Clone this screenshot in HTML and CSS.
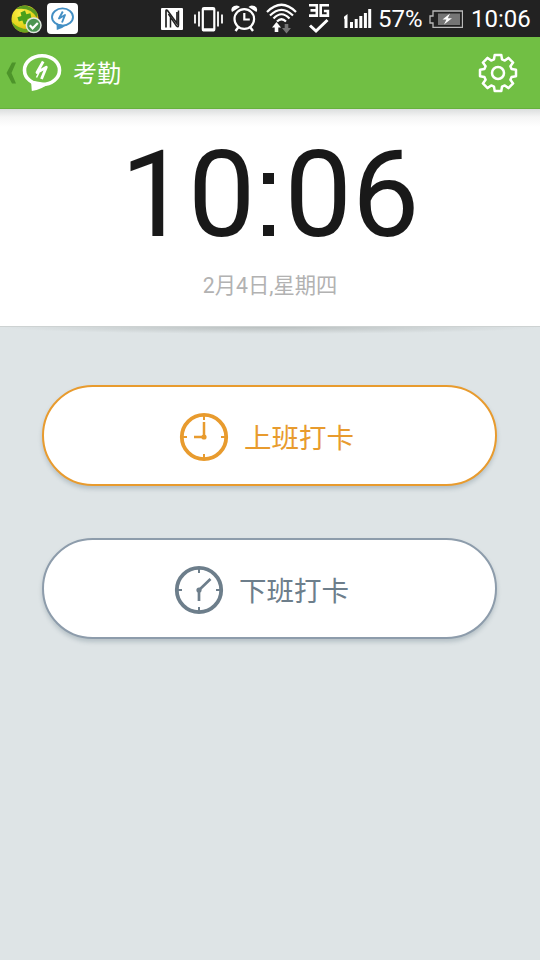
FILE: index.html
```html
<!DOCTYPE html>
<html lang="zh-CN">
<head>
<meta charset="utf-8">
<title>考勤</title>
<link rel="stylesheet" href="styles.css">
</head>
<body>
<div class="status-bar">
  <svg class="app-guard" width="32" height="31" viewBox="11 3 32 31">
    <defs>
      <radialGradient id="ball" cx="0.35" cy="0.3" r="0.75">
        <stop offset="0" stop-color="#fff04a"/><stop offset="0.6" stop-color="#e2d51c"/><stop offset="1" stop-color="#e99b12"/>
      </radialGradient>
      <clipPath id="ballClip"><circle cx="25" cy="19" r="13.5"/></clipPath>
    </defs>
    <circle cx="25" cy="19" r="13.5" fill="url(#ball)"/>
    <g clip-path="url(#ballClip)">
      <path d="M17 7Q28 2 38 13L37 18Q31 7 17 9Z" fill="#5c9a20"/>
      <path d="M12 22Q19 30 31 29L29 34H14Z" fill="#68a81e"/>
      <path d="M20.500 12.500l4.500-2 1.400 3.800 4-1 1 4.600-4 1.200 1 4-4.500 1.500-1.500-4-3.600 1-1.400-4.400 4-1.300z" fill="#4ba01b"/>
    </g>
    <circle cx="33.700" cy="25.300" r="7.300" fill="#4b9451" stroke="#dfe9df" stroke-width="1.500"/>
    <path d="M29.800 25.300l2.800 3 5.200-5.300" fill="none" stroke="#fff" stroke-width="2.200"/>
  </svg>
  <svg class="app-chat" width="31" height="31" viewBox="47 3 31 31">
    <rect x="47" y="3" width="31" height="31" rx="4" fill="#fff"/>
    <ellipse cx="62.500" cy="17" rx="10.500" ry="8.600" fill="none" stroke="#438fc4" stroke-width="1.900"/>
    <path d="M56.500 23.500l.3 6.500q5-1 9-4.500z" fill="#438fc4"/>
    <path d="M62.800 11.500L59 18.500L65 15L62 22.500" fill="none" stroke="#438fc4" stroke-width="1.900" stroke-linejoin="round"/>
  </svg>
  <svg class="nfc" width="22" height="22" viewBox="161 7 22 22">
    <rect x="161" y="7" width="22" height="22" rx="1" fill="#fff"/>
    <path d="M166 26.500V10q0-1.500 1.500-.5l9.500 13V11" fill="none" stroke="#222" stroke-width="1.700"/>
    <path d="M170.500 15v11.500M178.500 9.500V24q0 3-2 1L168.500 13" fill="none" stroke="#222" stroke-width="1.500"/>
  </svg>
  <svg class="vibrate" width="29" height="26" viewBox="194 5 29 26">
    <path d="M195 13.500v9M199 10.500v15M218 10.500v15M222 13.500v9" stroke="#fff" stroke-width="1.800"/>
    <rect x="202.800" y="7" width="11.500" height="22.500" rx="1.500" fill="none" stroke="#fff" stroke-width="2.200"/>
    <path d="M202 8h13M202 28.500h13" stroke="#fff" stroke-width="2.400"/>
  </svg>
  <svg class="alarm" width="27" height="27" viewBox="231 5 27 27">
    <g fill="none" stroke="#fff">
      <circle cx="244.300" cy="19" r="9.800" stroke-width="2.200"/>
      <path d="M244.300 13v6.500h5.500" stroke-width="2.200"/>
      <path d="M238.500 27l-3 4M250 27l3 4" stroke-width="2.400"/>
    </g>
    <path d="M232 12q-2-4 2-6 4-1.500 6 1zM256.500 12q2-4-2-6-4-1.500-6 1z" fill="#fff"/>
  </svg>
  <svg class="wifi" width="32" height="31" viewBox="266 3 32 31">
    <g fill="none" stroke="#fff" stroke-width="2.200">
      <path d="M267 12Q281.500-2.500 296 12M270 15.500Q281.500 4 293 15.500M273.500 18.500Q281.500 10 289.500 18.500M277 21.500Q281.500 17 286 21.500"/>
    </g>
    <path d="M276.500 22l-4.500 5.500h2.700V32h3.600v-4.500h2.700z" fill="#fff"/>
    <path d="M286.500 33.500l-4.500-5.500h2.700V24h3.600v4h2.700z" fill="#747474"/>
  </svg>
  <svg class="three-g" width="22" height="31" viewBox="308 3 22 31">
    <g fill="none" stroke="#fff" stroke-width="2.600">
      <path d="M309 5.200h7.800v10.400H309M310.500 10.400h6M329 5.200h-8.300v10.400h7.200V11h-4"/>
      <path d="M310 25.500l6 5.500 11.500-11" stroke-width="3"/>
    </g>
  </svg>
  <svg class="signal" width="28" height="20" viewBox="344 9 28 20">
    <path d="M344 18.500l2-1.500v11M351.500 22v6M356.200 19v9M360.800 16v12M365.400 13v15M369.700 9v19" fill="none" stroke="#fff" stroke-width="3"/>
  </svg>
  <span class="percent">57%</span>
  <svg class="battery" width="34" height="18" viewBox="429 9 34 18">
    <path d="M433 10h29.500v16.500H433V22h-3v-7h3z" fill="none" stroke="#b9b9b9" stroke-width="1.300"/>
    <rect x="438" y="12.500" width="22" height="11.500" fill="#757575"/>
    <path d="M450 12.500l-7.500 6h4l-2.500 5 8-6.200h-4.200z" fill="#fff"/>
  </svg>
  <span class="time">10:06</span>
</div>
<header class="header">
  <svg class="back" width="11" height="22" viewBox="6 62 11 22">
    <path d="M12 62.500h4L11.500 73l4.500 10.500h-4L6.500 73z" fill="#4d942a"/>
  </svg>
  <svg class="logo" width="40" height="39" viewBox="22 54 40 39">
    <ellipse cx="42" cy="71.200" rx="17.500" ry="14.500" fill="none" stroke="#fff" stroke-width="3.600"/>
    <path d="M31 81.500l.8 10.500q10-1.500 17-7.500z" fill="#fff"/>
    <path d="M43.200 62.500L37 73.500L46.300 68.300L41.500 80" fill="none" stroke="#fff" stroke-width="2.800" stroke-linejoin="round"/>
    <path d="M36.500 78.500L39 73.500" stroke="#fff" stroke-width="1.600"/>
  </svg>
  <h1 class="title">考勤</h1>
  <svg class="gear" width="40" height="40" viewBox="-20 -20 40 40" fill="none" stroke="#fff" stroke-width="2.500" stroke-linejoin="round">
    <path d="M-3.300-18H3.300L4-13.600 6.800-12.400 10.400-15.100 15.100-10.400 12.400-6.800 13.600-4 18-3.300V3.300L13.600 4 12.400 6.800 15.100 10.400 10.400 15.100 6.800 12.400 4 13.600 3.300 18H-3.300L-4 13.600-6.800 12.400-10.400 15.100-15.100 10.400-12.400 6.800-13.600 4-18 3.300V-3.300L-13.600-4-12.400-6.800-15.100-10.400-10.400-15.100-6.800-12.400-4-13.600Z"/>
    <circle r="6"/>
  </svg>
</header>
<section class="clock-panel">
  <div class="clock">10<span class="colon">:</span>06</div>
  <div class="date">2月4日,星期四</div>
</section>
<div class="panel-shadow"></div>
<main class="actions">
  <button class="punch punch-in">
    <svg width="50" height="50" viewBox="-25 -25 50 50" fill="none" stroke="currentColor">
      <circle r="22.200" stroke-width="3.800"/>
      <path d="M0-21v4M0 21v-4M-21 0h4M21 0h-4" stroke-width="2"/>
      <path d="M0-15V0H-10" stroke-width="2.500"/>
      <circle r="2.600" fill="currentColor" stroke="none"/>
    </svg>
    <span>上班打卡</span>
  </button>
  <button class="punch punch-out">
    <svg width="50" height="50" viewBox="-25 -25 50 50" fill="none" stroke="currentColor">
      <circle r="22.200" stroke-width="3.800"/>
      <path d="M0-21v4M0 21v-4M-21 0h4M21 0h-4" stroke-width="2"/>
      <path d="M11.500-11L0 0V11" stroke-width="2.700"/>
      <circle r="2.600" fill="currentColor" stroke="none"/>
    </svg>
    <span>下班打卡</span>
  </button>
</main>
</body>
</html>
```

FILE: styles.css
```css
* { box-sizing: border-box; }
body {
  margin: 0;
  width: 540px;
  height: 960px;
  overflow: hidden;
  display: flex;
  flex-direction: column;
  background: #dee4e6;
  font-family: Roboto, "Noto Sans CJK SC", sans-serif;
}
svg { display: block; flex: none; }
.status-bar {
  height: 37px;
  flex: none;
  display: flex;
  align-items: center;
  padding-left: 11px;
  background: #222;
  color: #fff;
  font-size: 24px;
  line-height: 37px;
  white-space: nowrap;
}
.app-chat { margin-left: 4px; }
.nfc { margin-left: 83px; }
.vibrate { margin-left: 11px; }
.alarm { margin-left: 8px; }
.wifi { margin-left: 8px; }
.three-g { margin-left: 10px; }
.signal { margin-left: 14px; }
.percent { width: 51px; margin-left: 6px; padding-top: 2px; }
.time { margin-left: 8px; padding-top: 2px; }
.header {
  height: 72px;
  flex: none;
  display: flex;
  align-items: center;
  padding: 0 22px 0 6px;
  background: #71bf44;
  border-bottom: 1px solid #66b13c;
  color: #fff;
}
.logo { margin-left: 5px; }
.title {
  margin: 0 auto 0 11px;
  padding-top: 2px;
  font-size: 24px;
  font-weight: 400;
  line-height: 36px;
}
.clock-panel {
  height: 217px;
  flex: none;
  display: flex;
  flex-direction: column;
  align-items: center;
  padding-top: 16px;
  background: linear-gradient(#dcdede, #f5f5f5 8px, #fff 18px);
}
.clock {
  font-size: 120px;
  line-height: 140px;
  color: #191919;
}
/* Square colon dots */
.colon {
  color: transparent;
  background:
    linear-gradient(#191919, #191919) 8px 48px / 11px 11px no-repeat,
    linear-gradient(#191919, #191919) 8px 100px / 11px 11px no-repeat;
  display: inline-block;
  height: 140px;
  vertical-align: top;
}
.date {
  margin-top: 6px;
  font-size: 21.300px;
  font-weight: 400;
  line-height: 30px;
  color: #b2b2b2;
}
/* Strongest in the middle, fading to the sides */
.panel-shadow {
  height: 8px;
  flex: none;
  border-top: 1px solid #cdd2d2;
  background: radial-gradient(ellipse 270px 7px at 50% 0, #b9bfbf, #dee4e6);
}
.actions {
  display: flex;
  flex-direction: column;
  gap: 52px;
  padding: 51px 43px 0 42px;
}
.punch {
  height: 101px;
  display: flex;
  align-items: center;
  justify-content: center;
  gap: 15px;
  padding: 2px 6px 0 0;
  border: 2px solid;
  border-radius: 51px;
  background: #fff;
  box-shadow: 0 3px 4px rgba(80, 105, 120, .28);
  font-family: inherit;
  font-size: 27.500px;
  font-weight: 400;
}
.punch span { margin-top: -2px; }
.punch-in { color: #e89b2e; }
.punch-out { color: #6d7e8b; border-color: #8d9cab; padding-right: 16px; }
```
